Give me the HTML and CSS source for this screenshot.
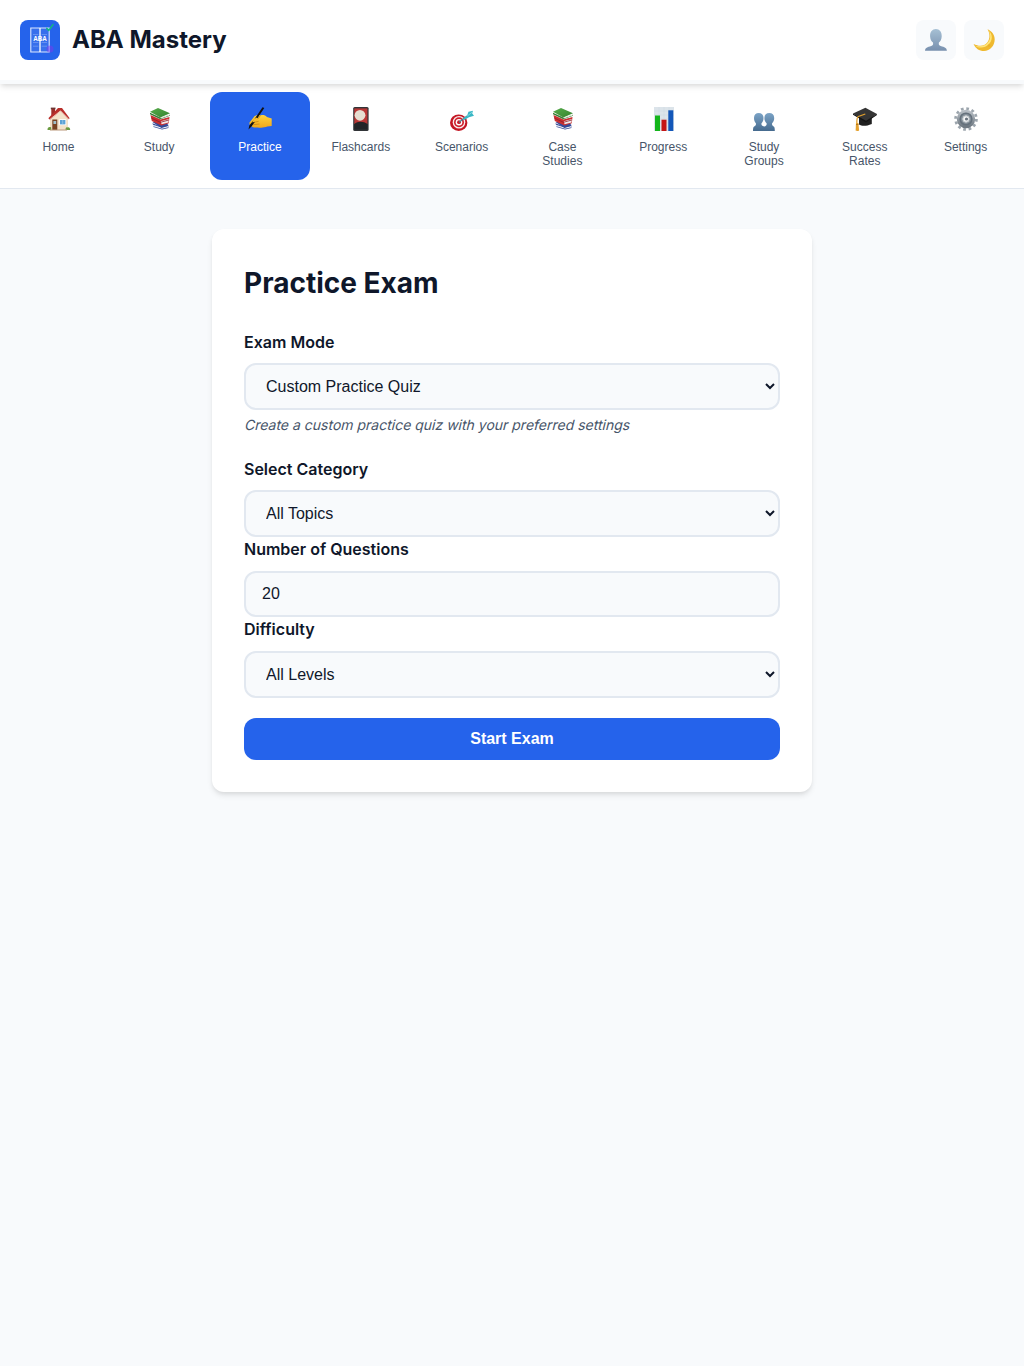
FILE: index.html
```html
<!DOCTYPE html>
<html lang="en">
<head>
<meta charset="utf-8">
<title>ABA Mastery</title>
<link rel="stylesheet" href="styles.css">
</head>
<body>
<svg class="defs" width="0" height="0" aria-hidden="true">
  <defs>
    <linearGradient id="person" x1="0" y1="0" x2="0" y2="1"><stop offset="0" stop-color="#a6c0d4"/><stop offset="1" stop-color="#7890ae"/></linearGradient>
    <linearGradient id="people" x1="0" y1="0" x2="0" y2="1"><stop offset="0" stop-color="#7ba3c6"/><stop offset="1" stop-color="#456a8e"/></linearGradient>
    <linearGradient id="gold" x1="0" y1="0" x2="0" y2="1"><stop offset="0" stop-color="#ffd33c"/><stop offset="1" stop-color="#f0a71c"/></linearGradient>
    <linearGradient id="steel" x1="0" y1="0" x2="0" y2="1"><stop offset="0" stop-color="#b4bbc2"/><stop offset="1" stop-color="#6f7982"/></linearGradient>
    <linearGradient id="cover" x1="0" y1="0" x2="1" y2="1"><stop offset="0" stop-color="#57ac4b"/><stop offset="1" stop-color="#34842e"/></linearGradient>
    <symbol id="books" viewBox="0 0 24 24">
      <path d="M4.500 15 14 21.500 20.500 19.800 19 15z" fill="#364c9c"/>
      <path d="M5 17.400 13.300 21 20 19v1.600L14 22 5.200 19.200z" fill="#e9edf4"/>
      <path d="M4.400 16.300 13 19.600 20.300 17.800v1L13.600 20.500 5 17.700zM5.300 19.300l8.700 2.400 6.500-1.500v.8L14 22.500 5.500 20z" fill="#344895"/>
      <path d="M2.500 8 12.500 12.600 21.500 10 20.800 16.300 13.300 18.400 3.800 14z" fill="#c92f30"/>
      <path d="m12.800 14.300 8-2.300-.3 3.400-6.900 1.900z" fill="#f2e9e9"/>
      <path d="m3.500 11.200 9 4.100 8.300-2.300" fill="none" stroke="#8d1e2a" stroke-width=".8"/>
      <path d="M2 4.800 10 .9 22 6.300 12.400 10.400z" fill="url(#cover)"/>
      <path d="M2 4.800v2.400l10.400 5L22 8.800l-.2-1-9.100 3.100-.3-.5L2 5.800z" fill="#347c32"/>
      <path d="m12.800 10.600 8.800-3.200v1.100l-8.800 3z" fill="#e5ece0"/>
    </symbol>
  </defs>
</svg>
<header class="header">
  <div class="brand">
    <svg class="logo" viewBox="0 0 40 40">
      <rect width="40" height="40" rx="8" fill="#2563eb"/>
      <path d="M10.800 8h18.400v24H10.800z" fill="#376fec" stroke="#dce7ff" stroke-width="1.100"/>
      <path d="M13 14.500h5.400m3.200 0H27m-14 8h5.400m3.200 0H27m-14 3.700h5.400m3.200 0H27" stroke="#719bf2" stroke-width=".8"/>
      <path d="M20 8v24" stroke="#fff" stroke-width="1.300"/>
      <circle cx="30" cy="29" r="3.500" fill="#7c3aed" opacity=".5"/>
      <text x="20" y="21.300" font-size="6.300" font-weight="700" text-anchor="middle" fill="#fff">ABA</text>
      <path d="m26.700 8.200 2 2.300 4.400-6" fill="none" stroke="#10b981" stroke-width="1.400" stroke-linecap="round" stroke-linejoin="round"/>
    </svg>
    <h1>ABA Mastery</h1>
  </div>
  <div class="actions">
    <button class="icon-btn" aria-label="Profile"><svg viewBox="0 0 22 22"><path d="M5.100 7.500C4.900 2.800 7.300 0 10.900 0s6 2.800 5.800 7.500c-.2 3-1.200 5-2.800 6.100-.4 2.200.1 2.900 1.800 3.500 4 1.200 5.900 1.700 6.200 4.700H0c.3-3 2.200-3.500 6.200-4.700 1.700-.6 2.200-1.300 1.800-3.500-1.700-1.100-2.700-3.100-2.900-6.100z" fill="url(#person)"/></svg></button>
    <button class="icon-btn" aria-label="Dark mode"><svg viewBox="0 0 22 22"><path d="M14.500.3c4.300 1.700 7.300 5.700 7.200 10.300C21.600 16.900 17 22 11 22 6.200 22 2.300 19.100.6 14.900c5 2.600 10.600 2.500 13.500-1.100 3.300-4 2.900-9.300.4-13.500z" fill="#efb92f"/><path d="M15.700 1.700c4.400 3.900 3.900 10-.2 13.900-3.500 3.500-9.200 3.900-13.700 1.100 5.700 1.500 10.200.5 13.100-3.100 2.800-3.500 3-7.700.8-11.900z" fill="#ffe579"/><circle cx="16" cy="16.500" r="1.300" fill="#e3a926" opacity=".5"/></svg></button>
  </div>
</header>
<nav class="nav">
  <button class="nav-item"><span class="ico"><svg viewBox="0 0 24 24">
    <path d="M3 11 12 3h2l7 8v12H3z" fill="#f3e2c9"/><path d="M4.300 1.500h3.700V8H4.300z" fill="#9e2c29"/><path d="M3.800.6h4.700v1.700H3.800z" fill="#6d3632"/>
    <path d="M1.300 11.300 11 1h4l7.700 10.300-1.300 1L13.500 4 3 12.700z" fill="#b92f2b"/><path d="M3 12.300 13.500 3.800l8 8.200" fill="none" stroke="#fff4e5" stroke-width=".7"/>
    <path d="M5.300 12.500h5V23h-5z" fill="#784322"/><path d="M6.400 14h2.800v3H6.400z" fill="#a0bfca"/><path d="M12.200 12.200h7v6h-7z" fill="#fff"/><path d="M13 13h5.400v4.400H13z" fill="#5ba2d6"/><path d="M15.700 13v4.500" stroke="#a9d0e8" stroke-width=".6"/>
    <path d="M.5 23c0-2.600 1.400-3.400 3.700-2.600V23zm18 0c0-2.300.8-3 1.700-2.600 1.900-.7 3 .5 3 2.600z" fill="#6b9b3f"/><path d="M3 22.500h17v1H3z" fill="#b89778"/>
  </svg></span><span>Home</span></button>
  <button class="nav-item"><span class="ico"><svg><use href="#books"/></svg></span><span>Study</span></button>
  <button class="nav-item active"><span class="ico"><svg viewBox="0 0 24 24">
    <path d="M1.500 15.500 6.500 9.300c2-1.300 4.500-1.500 6-.8 2.300-.8 4.500-.5 6.400 1.600l4.800 1.500v7.300l-4.400.7c-3 1.300-7 1.300-9.700.8-2.400.4-5.400.1-6-1.200-1.600-.5-2.400-2-2.100-3.700z" fill="url(#gold)"/>
    <path d="m5 15.500 5.600-1.200m-5.300 3.400 6.200-.7m1-8.500-2.900 3.600" fill="none" stroke="#c98516" stroke-width=".8"/><path d="M14.500.3 16.300 1 9.100 11.700 3.700 19.200.5 22.400l.8-3.800 5.800-7.300z" fill="#111"/><path d="m5.500 12.500 2.900-1.900 2 1.300-2.600 2.500-3.500 1z" fill="#f8bd2b"/>
  </svg></span><span>Practice</span></button>
  <button class="nav-item"><span class="ico"><svg viewBox="0 0 24 24">
    <rect x="4.200" width="15.400" height="24" rx="1.500" fill="#313437"/><path d="M5.300 1.400h13.100V17H5.300z" fill="#b93735"/><circle cx="11" cy="8.300" r="5.400" fill="#e7dfd1"/><path d="M5.300 17c3.300-3 9.200-3 13.100 0v5.500H5.300z" fill="#222427"/>
  </svg></span><span>Flashcards</span></button>
  <button class="nav-item"><span class="ico"><svg viewBox="0 0 24 24">
    <ellipse cx="8.700" cy="15.700" rx="8.700" ry="8.300" fill="#c41724"/><circle cx="9" cy="15.200" r="6.300" fill="#f9eded"/><circle cx="9" cy="15.200" r="5" fill="#cf202b"/><circle cx="9" cy="15.200" r="3.300" fill="#fff"/><circle cx="9" cy="15.200" r="1.900" fill="#cc1725"/><path d="m9 15.200 8.500-6.500" stroke="#457f91" stroke-width="1.200"/><path d="m13 11.200 4-2.500 1.500-4 4.500-1-.8 2.700L24 8.700l-5 1.500-4.700 2.700z" fill="#39b7c5"/><path d="m17.300 9 4.700-3.700" stroke="#9ce5e8" stroke-width=".7"/>
  </svg></span><span>Scenarios</span></button>
  <button class="nav-item"><span class="ico"><svg><use href="#books"/></svg></span><span>Case Studies</span></button>
  <button class="nav-item"><span class="ico"><svg viewBox="0 0 24 24">
    <path d="M2 0h20v24H2z" fill="#dce4ea"/><path d="M2 4h20M2 8h20M2 12h20M2 16h20M2 20h20M7 0v24m5-24v24m5-24v24" stroke="#c8d4de" stroke-width=".4"/><path d="M3 8.500h5V24H3z" fill="#14b51b"/><path d="M9.500 12.700h5V24h-5z" fill="#c51616"/><path d="M16.300 3.300h5V24h-5z" fill="#1357b9"/>
  </svg></span><span>Progress</span></button>
  <button class="nav-item"><span class="ico"><svg viewBox="0 0 24 24">
    <path d="M2 11c0-3 1.900-4.900 4.700-4.900S11.500 8 11.500 11c0 2.300-.7 4.200-2 5.300-.3 2 .4 2.700 2.700 3.300 1.900-.6 2.700-1.300 2.400-3.300-1.400-1.100-2.200-3-2.200-5.300 0-3 2-4.900 4.900-4.900S22.200 8 22.200 11c0 2.300-.8 4.200-2.100 5.300-.3 2.100.5 2.700 1.600 3.100.9.500 1.100 1.700 1.100 4.600H1c0-3 .3-4.100 1.200-4.600 1.200-.4 2-1 1.700-3.100C2.700 15.200 2 13.300 2 11z" fill="url(#people)"/>
  </svg></span><span>Study Groups</span></button>
  <button class="nav-item"><span class="ico"><svg viewBox="0 0 24 24">
    <path d="M6 9v8.500c2.500 1.500 6.500 2.200 12.800-.5V8z" fill="#202020"/><path d="M0 6.500 12.400.7 24 7l-11 7.700z" fill="#353535"/><path d="m0 6.500 13 7.200L24 7v1L13 15.500 0 7.700z" fill="#151515"/><path d="m12.300 7-7 2.500c-1.300.6-1.600 2-1.500 7.500" fill="none" stroke="#e1a02d" stroke-width="1.300"/><path d="m3 16 2.400.1.700 7.300c-1.200.7-2.300.7-3.500.1z" fill="#e5a22f"/><path d="M3 17.500h2.500" stroke="#9f671b" stroke-width=".7"/>
  </svg></span><span>Success Rates</span></button>
  <button class="nav-item"><span class="ico"><svg viewBox="0 0 24 24">
    <circle cx="12" cy="12" r="10.400" fill="none" stroke="#9ca5ad" stroke-width="2.800" stroke-dasharray="2.700 2.745"/><circle cx="12" cy="12" r="7.300" fill="#87929b" stroke="url(#steel)" stroke-width="3.800"/><circle cx="12" cy="12" r="5.800" fill="none" stroke="#65717c" stroke-width="1.600"/><circle cx="12" cy="12" r="3.200" fill="#f6f7f8" stroke="#c7cdd1" stroke-width="1"/><circle cx="12.500" cy="12" r="1.600" fill="#6a747e"/>
  </svg></span><span>Settings</span></button>
</nav>
<main class="card">
  <h2>Practice Exam</h2>
  <label for="mode">Exam Mode</label>
  <select id="mode"><option>Custom Practice Quiz</option></select>
  <p class="hint">Create a custom practice quiz with your preferred settings</p>
  <label for="category">Select Category</label>
  <select id="category"><option>All Topics</option></select>
  <label for="count">Number of Questions</label>
  <input id="count" type="number" value="20">
  <label for="level">Difficulty</label>
  <select id="level"><option>All Levels</option></select>
  <button class="start">Start Exam</button>
</main>
</body>
</html>
```
FILE: styles.css
```css
* { box-sizing: border-box; margin: 0; padding: 0; }
body { font-family: Inter, sans-serif; background: #f8fafc; color: #0f172a; line-height: 1.6; min-height: 100vh; -webkit-font-smoothing: antialiased; }
button, select, input { font-family: "Liberation Sans", Arial, sans-serif; }
svg { display: block; }
.defs { position: absolute; }
.header { position: relative; z-index: 1; height: 84px; padding: 0 20px; background: #fff; border-bottom: 4px solid #f8fafc; display: flex; align-items: center; justify-content: space-between; box-shadow: 0 4px 6px -1px rgba(0,0,0,.1), 0 2px 4px -1px rgba(0,0,0,.06); }
.brand { display: flex; align-items: center; gap: 12px; }
.logo { width: 40px; height: 40px; font-family: "Liberation Sans", sans-serif; }
h1 { font-size: 24px; font-weight: 700; line-height: 38px; }
.actions { display: flex; gap: 8px; }
.icon-btn { width: 40px; height: 40px; border: 0; border-radius: 8px; background: #f8fafc; display: flex; align-items: center; justify-content: center; }
.icon-btn svg { width: 22px; height: 22px; }
.nav { height: 105px; padding: 8px; background: #fff; border-bottom: 1px solid #e2e8f0; display: flex; }
.nav-item { flex: 1 1 0; min-width: 0; display: flex; flex-direction: column; align-items: center; gap: 4px; padding: 12px 20px; border: 0; border-radius: 12px; background: none; color: #475569; font-size: 12px; }
.nav-item.active { background: #2563eb; color: #fff; }
.ico { height: 32px; padding-top: 3px; padding-left: 1px; }
.ico svg { width: 24px; height: 24px; }
.card { width: 600px; margin: 40px auto; padding: 32px; background: #fff; border-radius: 12px; box-shadow: 0 4px 6px -1px rgba(0,0,0,.1), 0 2px 4px -1px rgba(0,0,0,.06); }
h2 { font-size: 28px; font-weight: 700; margin-bottom: 24px; }
label { display: block; font-weight: 600; font-size: 16px; margin-bottom: 8px; }
select, input { display: block; width: 100%; padding: 12px 16px; border: 2px solid #e2e8f0; border-radius: 12px; background: #f8fafc; color: #0f172a; font-size: 16px; }
/* slanted upright letterforms, leaning from the baseline */
.hint { font-size: 14px; color: #475569; margin: 4px 0 20px; transform: skewX(-14deg); transform-origin: 0 16px; }
.start { width: 100%; height: 42px; margin-top: 20px; border: 0; border-radius: 12px; background: #2563eb; color: #fff; font-size: 16px; font-weight: 600; }
```
